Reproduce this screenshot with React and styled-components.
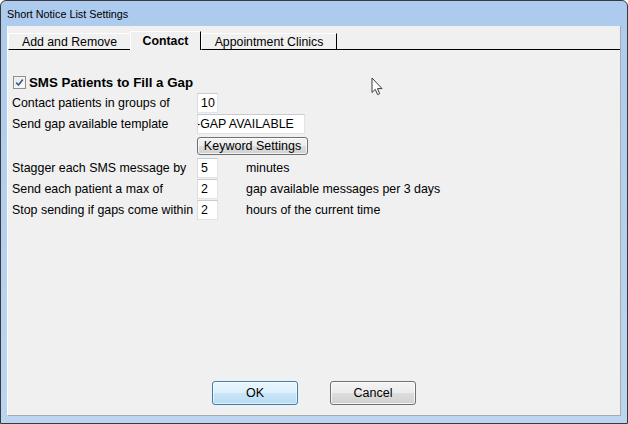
import React from "react";
import styled, { createGlobalStyle } from "styled-components";

const Global = createGlobalStyle`
  html, body { margin: 0; padding: 0; background: #ffffff; }
  body { font-family: "Liberation Sans", Arial, sans-serif; }
`;

const Window = styled.div`
  position: relative;
  width: 628px;
  height: 424px;
  box-sizing: border-box;
  border: 1px solid #3a3a3a;
  border-radius: 6px 6px 0 0;
  background: linear-gradient(180deg, #adcbee 0%, #b6d1ef 60%, #bcd5f0 100%);
  display: flex;
  flex-direction: column;
  overflow: hidden;
`;

const TitleBar = styled.div`
  flex: none;
  height: 25px;
  display: flex;
  align-items: center;
  padding-left: 6px;
  font-size: 10.8px;
  color: #000;
`;

const Client = styled.div`
  flex: 1;
  min-height: 0;
  margin: 0 6px 7px 6px;
  background: #f0f0f0;
  border-left: 1px solid #fbfbfb;
  border-right: 1px solid #a9a9a9;
  border-bottom: 1px solid #a9a9a9;
  display: flex;
  flex-direction: column;
`;

const TabStrip = styled.div`
  flex: none;
  height: 24px;
  display: flex;
  align-items: flex-end;
`;

const Tab = styled.div`
  box-sizing: border-box;
  width: ${(p) => p.$w}px;
  height: ${(p) => (p.$active ? 19 : 17)}px;
  display: flex;
  align-items: center;
  justify-content: center;
  font-size: 12.3px;
  font-weight: ${(p) => (p.$active ? 700 : 400)};
  padding-top: ${(p) => (p.$active ? 0 : 1)}px;
  color: #000;
  background: #f0f0f0;
  border-top: 1px solid #ffffff;
  border-left: 1px solid #ffffff;
  border-right: ${(p) => (p.$beforeActive ? "none" : "1px solid #000")};
  border-bottom: ${(p) => (p.$active ? "none" : "1px solid #000")};
`;

const TabFiller = styled.div`
  flex: 1;
  align-self: stretch;
  border-bottom: 1px solid #000;
`;

const Page = styled.div`
  flex: 1;
  min-height: 0;
  display: flex;
  flex-direction: column;
  padding: 22px 0 10px 0;
`;

const Form = styled.div`
  display: flex;
  flex-direction: column;
  gap: 1px;
  padding-left: 4px;
`;

const CheckRow = styled.div`
  height: 20px;
  display: flex;
  align-items: center;
  gap: 3px;
`;

const CheckBox = styled.span`
  box-sizing: border-box;
  width: 13px;
  height: 13px;
  margin-left: 1px;
  border: 1px solid #8e8f8f;
  background: linear-gradient(135deg, #e4e4e4 0%, #f6f6f6 60%, #ffffff 100%);
  box-shadow: inset 0 0 0 1px #f4f4f4;
  display: flex;
  align-items: center;
  justify-content: center;
`;

const CheckLabel = styled.span`
  font-size: 13.3px;
  font-weight: 700;
  color: #000;
`;

const Row = styled.div`
  height: 20px;
  display: flex;
  align-items: center;
`;

const Label = styled.span`
  width: 185px;
  flex: none;
  font-size: 12.4px;
  color: #000;
  white-space: nowrap;
`;

const TextBox = styled.div`
  box-sizing: border-box;
  width: ${(p) => p.$w}px;
  height: 20px;
  flex: none;
  background: #ffffff;
  border: 1px solid #e2e3ea;
  border-top-color: #c9cbd1;
  border-left-color: #dadce2;
  padding-left: ${(p) => (p.$clipped ? 0 : 3)}px;
  display: flex;
  align-items: center;
  overflow: hidden;
  white-space: nowrap;
  font-size: 12.4px;
  color: #000;
`;

const ClippedText = styled.span`
  margin-left: -2px;
`;

const Suffix = styled.span`
  margin-left: 28px;
  font-size: 12.4px;
  color: #000;
  white-space: nowrap;
`;

const ButtonRow = styled.div`
  display: flex;
  padding-left: 185px;
  margin: 2px 0;
`;

const PushButton = styled.button`
  box-sizing: border-box;
  width: ${(p) => p.$w}px;
  height: ${(p) => p.$h}px;
  padding: 0;
  border: 1px solid ${(p) => (p.$primary ? "#3c7fb1" : "#707070")};
  border-radius: 3px;
  background: ${(p) =>
    p.$primary
      ? "linear-gradient(180deg, #eaf6fd 0%, #dcf0fb 48%, #c9e6f8 52%, #b8dcf3 100%)"
      : "linear-gradient(180deg, #f3f3f3 0%, #ececec 48%, #dddddd 52%, #d0d0d0 100%)"};
  box-shadow: inset 0 0 0 1px ${(p) => (p.$primary ? "rgba(255,255,255,0.55)" : "rgba(255,255,255,0.75)")};
  font-family: "Liberation Sans", Arial, sans-serif;
  font-size: 12.5px;
  color: #000;
  display: flex;
  align-items: center;
  justify-content: center;
`;

const Footer = styled.div`
  margin-top: auto;
  display: flex;
  justify-content: center;
  gap: 32px;
`;

const Cursor = styled.svg`
  position: absolute;
  left: 370px;
  top: 76px;
  pointer-events: none;
`;

const fields = [
  { label: "Stagger each SMS message by", value: "5", suffix: "minutes" },
  { label: "Send each patient a max of", value: "2", suffix: "gap available messages per 3 days" },
  { label: "Stop sending if gaps come within", value: "2", suffix: "hours of the current time" },
];

export default function App() {
  return (
    <>
      <Global />
      <Window>
        <TitleBar>Short Notice List Settings</TitleBar>
        <Client>
          <TabStrip>
            <Tab $w={122} $beforeActive>Add and Remove</Tab>
            <Tab $w={71} $active>Contact</Tab>
            <Tab $w={136}>Appointment Clinics</Tab>
            <TabFiller />
          </TabStrip>
          <Page>
            <Form>
              <CheckRow>
                <CheckBox>
                  <svg width="9" height="9" viewBox="0 0 9 9">
                    <path d="M1.2 4.6 L3.5 7 L7.8 1.4" fill="none" stroke="#3f5a8c" strokeWidth="1.7" />
                  </svg>
                </CheckBox>
                <CheckLabel>SMS Patients to Fill a Gap</CheckLabel>
              </CheckRow>
              <Row>
                <Label>Contact patients in groups of</Label>
                <TextBox $w={21}>10</TextBox>
              </Row>
              <Row>
                <Label>Send gap available template</Label>
                <TextBox $w={108} $clipped>
                  <ClippedText>-GAP AVAILABLE</ClippedText>
                </TextBox>
              </Row>
              <ButtonRow>
                <PushButton $w={111} $h={18}>Keyword Settings</PushButton>
              </ButtonRow>
              {fields.map((f) => (
                <Row key={f.label}>
                  <Label>{f.label}</Label>
                  <TextBox $w={21}>{f.value}</TextBox>
                  <Suffix>{f.suffix}</Suffix>
                </Row>
              ))}
            </Form>
            <Footer>
              <PushButton $w={86} $h={24} $primary>OK</PushButton>
              <PushButton $w={86} $h={24}>Cancel</PushButton>
            </Footer>
          </Page>
        </Client>
        <Cursor width="13" height="19" viewBox="0 0 13 19">
          <path
            d="M1 1 L1 15.5 L4.3 12.4 L6.6 17.6 L8.7 16.7 L6.5 11.6 L11 11.6 Z"
            fill="#ffffff"
            stroke="#3a3a3a"
            strokeWidth="1"
            strokeLinejoin="round"
          />
        </Cursor>
      </Window>
    </>
  );
}
